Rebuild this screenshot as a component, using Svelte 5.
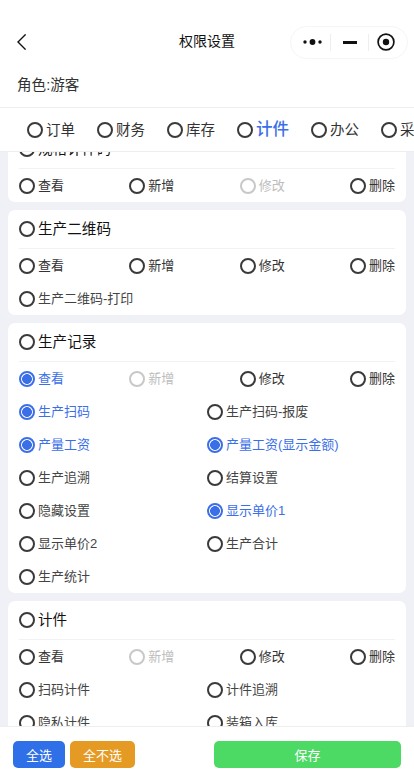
<script>
  import { onMount } from 'svelte';

  const tabs = ['订单', '财务', '库存', '计件', '办公', '采购'];
  const activeTab = '计件';

  // state: 0 = off, 1 = checked, 2 = disabled
  const cards = [
    {
      title: '规格计件码',
      ops: [['查看', 0], ['新增', 0], ['修改', 2], ['删除', 0]],
      extras: []
    },
    {
      title: '生产二维码',
      ops: [['查看', 0], ['新增', 0], ['修改', 0], ['删除', 0]],
      extras: [['生产二维码-打印', 0]]
    },
    {
      title: '生产记录',
      ops: [['查看', 1], ['新增', 2], ['修改', 0], ['删除', 0]],
      extras: [
        ['生产扫码', 1], ['生产扫码-报废', 0],
        ['产量工资', 1], ['产量工资(显示金额)', 1],
        ['生产追溯', 0], ['结算设置', 0],
        ['隐藏设置', 0], ['显示单价1', 1],
        ['显示单价2', 0], ['生产合计', 0],
        ['生产统计', 0]
      ]
    },
    {
      title: '计件',
      ops: [['查看', 0], ['新增', 2], ['修改', 0], ['删除', 0]],
      extras: [['扫码计件', 0], ['计件追溯', 0], ['隐私计件', 0], ['装箱入库', 0]]
    }
  ];

  let scroller;

  // the list is shown scrolled down a little
  onMount(() => {
    scroller.scrollTop = 22;
  });
</script>

<div class="page">
  <header class="nav">
    <button class="back" aria-label="返回">
      <svg viewBox="0 0 9 16" width="9" height="16"><path d="M8.6 .4 1 8 8.6 15.6" fill="none" stroke="#111" stroke-width="1.4" /></svg>
    </button>
    <h1>权限设置</h1>
    <div class="capsule">
      <svg class="dots" viewBox="0 0 19 8" width="19" height="8"><circle cx="2" cy="4" r="1.7" /><circle cx="9.5" cy="4" r="2.9" /><circle cx="17" cy="4" r="1.7" /></svg>
      <i></i>
      <span class="dash"></span>
      <i></i>
      <svg class="target" viewBox="0 0 18 18" width="18" height="18"><circle cx="9" cy="9" r="7.9" fill="none" stroke="#111" stroke-width="1.7" /><circle cx="9" cy="9" r="3.2" /></svg>
    </div>
  </header>

  <div class="role">角色:游客</div>

  <nav class="tabs">
    {#each tabs as tab}
      <div class="tab" class:active={tab === activeTab}>
        <span class="radio"></span>
        <span class="label">{tab}</span>
      </div>
    {/each}
  </nav>

  <main class="list" bind:this={scroller}>
    {#each cards as card}
      <section class="card">
        <div class="card-title">
          <span class="radio"></span>
          <span class="label">{card.title}</span>
        </div>
        <div class="ops">
          {#each card.ops as [label, state]}
            <div class="opt" class:checked={state === 1} class:disabled={state === 2}>
              <span class="radio"></span>
              <span class="label">{label}</span>
            </div>
          {/each}
        </div>
        {#if card.extras.length}
          <div class="extras">
            {#each card.extras as [label, state]}
              <div class="opt light" class:checked={state === 1}>
                <span class="radio"></span>
                <span class="label">{label}</span>
              </div>
            {/each}
          </div>
        {/if}
      </section>
    {/each}
  </main>

  <footer class="bar">
    <button class="btn blue">全选</button>
    <button class="btn orange">全不选</button>
    <button class="btn green">保存</button>
  </footer>
</div>

<style>
  :global(body) {
    margin: 0;
    font-family: "Liberation Sans", "Noto Sans CJK SC", sans-serif;
  }

  .page {
    width: 414px;
    height: 780px;
    display: flex;
    flex-direction: column;
    background: #f0f1f7;
    overflow: hidden;
  }

  .nav {
    height: 69px;
    flex: none;
    background: #fff;
    display: flex;
    align-items: center;
    justify-content: space-between;
    padding: 15px 6px 0 17px;
    box-sizing: border-box;
    position: relative;
  }

  .nav h1 {
    position: absolute;
    left: 0;
    right: 0;
    top: 31px;
    margin: 0;
    text-align: center;
    font-size: 14px;
    line-height: 20px;
    font-weight: 400;
    color: #111;
  }

  .back {
    border: 0;
    background: none;
    padding: 0;
    display: flex;
  }

  .capsule {
    width: 118px;
    height: 33px;
    box-sizing: border-box;
    border: 1px solid #f5f5f5;
    border-radius: 17px;
    display: grid;
    grid-template-columns: 39px 1px 37px 1px 1fr;
    align-items: center;
    justify-items: center;
  }

  .capsule svg {
    fill: #111;
  }

  .dots {
    margin-left: 3px;
  }

  .target {
    margin-right: 4px;
  }

  .capsule i {
    width: 1px;
    height: 17px;
    background: #eee;
  }

  .dash {
    width: 14px;
    height: 3px;
    background: #111;
  }

  .role {
    height: 38px;
    flex: none;
    background: #fff;
    padding-left: 17px;
    font-size: 14.6px;
    line-height: 33px;
    color: #333;
    border-bottom: 1px solid #eee;
  }

  .tabs {
    height: 44px;
    flex: none;
    background: #fff;
    box-sizing: border-box;
    border-bottom: 1px solid #eee;
    display: flex;
    align-items: center;
    gap: 22px;
    padding-left: 27px;
    overflow: hidden;
    white-space: nowrap;
    position: relative;
    z-index: 1;
  }

  .tab {
    display: flex;
    align-items: center;
    gap: 3px;
    flex: none;
    font-size: 14.5px;
    color: #333;
  }

  .tab .label {
    margin-bottom: 3px;
  }

  .tab.active {
    color: #3b6fe8;
    font-size: 16.5px;
    font-weight: 500;
  }

  .radio {
    width: 16px;
    height: 16px;
    flex: none;
    box-sizing: border-box;
    border: 2px solid #3a3a3a;
    border-radius: 50%;
    background: #fff;
  }

  .list {
    flex: 1;
    min-height: 0;
    overflow: hidden;
    padding: 0 8px;
    display: flex;
    flex-direction: column;
    gap: 8px;
  }

  .card {
    flex: none;
    background: #fff;
    border-radius: 7px;
    padding: 0 11px;
  }

  .card-title {
    height: 38px;
    display: flex;
    align-items: center;
    gap: 3px;
    font-size: 14.6px;
    color: #111;
    border-bottom: 1px solid #f2f2f4;
  }

  .card-title .label {
    margin-bottom: 3px;
  }

  .ops {
    display: flex;
    justify-content: space-between;
    height: 33px;
    align-items: center;
  }

  .extras {
    display: grid;
    grid-template-columns: 188px 1fr;
    grid-auto-rows: 33px;
  }

  .opt {
    display: flex;
    align-items: center;
    gap: 3px;
    font-size: 13px;
    color: #333;
  }

  .opt .label {
    margin-bottom: 2px;
  }

  .opt.light {
    color: #444;
  }

  .opt.checked {
    color: #3b6fe8;
  }

  .opt.checked .radio {
    border-color: #3b6fe8;
    background: radial-gradient(circle, #3b6fe8 0 4.6px, #fff 5.2px);
  }

  .opt.disabled {
    color: #bdbdbd;
  }

  .opt.disabled .radio {
    border-color: #c8c8c8;
  }

  .bar {
    height: 54px;
    flex: none;
    box-sizing: border-box;
    background: #fff;
    border-top: 1px solid #eee;
    display: flex;
    align-items: flex-start;
    padding: 14px 13px 0 13px;
    gap: 5px;
    position: relative;
    z-index: 1;
  }

  .btn {
    height: 27px;
    border: 0;
    border-radius: 5px;
    color: #fff;
    font: inherit;
    font-size: 13px;
    padding: 0;
  }

  .blue { width: 52px; background: #2f6fe8; }
  .orange { width: 65px; background: #e59a24; }
  .green { width: 187px; margin-left: auto; background: #4cd964; }
</style>
